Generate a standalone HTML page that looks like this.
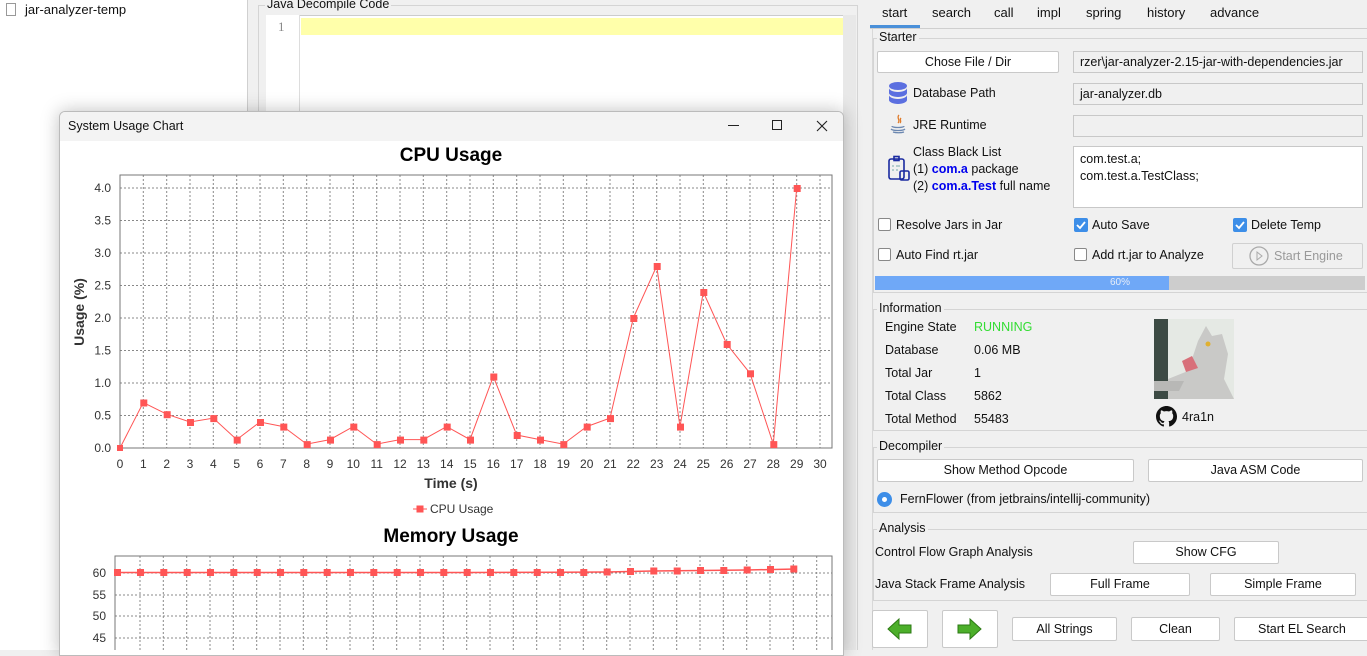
<!DOCTYPE html>
<html><head><meta charset="utf-8"><style>
*{margin:0;padding:0;box-sizing:border-box}
body{width:1367px;height:650px;overflow:hidden;background:#f0f0f0;font-family:"Liberation Sans",sans-serif;font-size:12.5px;color:#111;position:relative}
.a{position:absolute;white-space:nowrap}
.btn{position:absolute;background:#fff;border:1px solid #c9c9c9;border-radius:2px;text-align:center;font-size:12.5px}
.fld{position:absolute;background:#f0f0f0;border:1px solid #c8c8c8;padding-left:6px;font-size:12.5px}
.grp{position:absolute;border:1px solid #d4d4d4;border-right:none}
.gt{position:absolute;background:#f0f0f0;padding:0 2px;font-size:12.5px;top:-9px;left:3px}
.cb{position:absolute;width:13px;height:13px;border:1px solid #888;background:#fff;border-radius:2px}
.cbc{position:absolute;width:14px;height:14px;background:#3d8ee8;border-radius:2px}
</style></head><body>
<div class="a" style="left:0;top:0;width:248px;height:650px;background:#fff;border-right:1px solid #d0d0d0"></div>
<div class="a" style="left:6px;top:3px;width:10px;height:13px;border:1px solid #999;background:#fff"></div>
<div class="a" style="left:25px;top:2px;font-size:13px">jar-analyzer-temp</div>
<div class="a" style="left:258px;top:5px;width:600px;height:645px;border:1px solid #d4d4d4;border-bottom:none"></div>
<div class="a" style="left:265px;top:-3px;background:#f0f0f0;padding:0 2px;font-size:12.5px">Java Decompile Code</div>
<div class="a" style="left:266px;top:15px;width:578px;height:635px;background:#fff;border:1px solid #ccc"></div>
<div class="a" style="left:266px;top:15px;width:34px;height:635px;background:#fff;border-right:1px solid #ddd"></div>
<div class="a" style="left:278px;top:19px;color:#888;font-family:'Liberation Serif',serif;font-size:13px">1</div>
<div class="a" style="left:301px;top:18px;width:542px;height:17px;background:#ffffaa"></div>
<div class="a" style="left:843px;top:15px;width:13px;height:635px;background:#e8e8e8"></div>
<div class="a" style="left:59px;top:111px;width:785px;height:545px;background:#fff;border:1px solid #bbb;border-radius:6px 6px 0 0;box-shadow:0 0 18px rgba(0,0,0,.25);overflow:hidden">
<div style="height:29px;background:#f3f3f3;position:relative">
<div class="a" style="left:8px;top:7px;font-size:12.5px">System Usage Chart</div>
<div class="a" style="left:668px;top:13px;width:11px;height:1px;background:#222"></div>
<div class="a" style="left:712px;top:8px;width:10px;height:10px;border:1px solid #222"></div>
<svg class="a" style="left:756px;top:8px" width="12" height="12"><path d="M1 1L11 11M11 1L1 11" stroke="#222" stroke-width="1.1"/></svg>
</div></div>
<svg class="a" style="left:0;top:0" width="1367" height="650" viewBox="0 0 1367 650" font-family="Liberation Sans, sans-serif">
<text x="451" y="161" text-anchor="middle" font-size="19" font-weight="bold">CPU Usage</text>
<g stroke="#888" stroke-dasharray="2,2" stroke-width="1">
<path d="M120 188H832M120 220.5H832M120 253H832M120 285.5H832M120 318H832M120 350.5H832M120 383H832M120 415.5H832"/>
<path d="M143.3 175V448M166.7 175V448M190 175V448M213.3 175V448M236.7 175V448M260 175V448M283.3 175V448M306.7 175V448M330 175V448M353.3 175V448M376.7 175V448M400 175V448M423.3 175V448M446.7 175V448M470 175V448M493.3 175V448M516.7 175V448M540 175V448M563.3 175V448M586.7 175V448M610 175V448M633.3 175V448M656.7 175V448M680 175V448M703.3 175V448M726.7 175V448M750 175V448M773.3 175V448M796.7 175V448M820 175V448"/>
</g>
<rect x="120" y="175" width="712" height="273" fill="none" stroke="#777"/>
<g font-size="12" fill="#333" text-anchor="end">
<text x="111" y="452">0.0</text><text x="111" y="419.5">0.5</text><text x="111" y="387">1.0</text><text x="111" y="354.5">1.5</text><text x="111" y="322">2.0</text><text x="111" y="289.5">2.5</text><text x="111" y="257">3.0</text><text x="111" y="224.5">3.5</text><text x="111" y="192">4.0</text>
</g>
<g font-size="12" fill="#333" text-anchor="middle">
<text x="120" y="468">0</text><text x="143.3" y="468">1</text><text x="166.7" y="468">2</text><text x="190" y="468">3</text><text x="213.3" y="468">4</text><text x="236.7" y="468">5</text><text x="260" y="468">6</text><text x="283.3" y="468">7</text><text x="306.7" y="468">8</text><text x="330" y="468">9</text><text x="353.3" y="468">10</text><text x="376.7" y="468">11</text><text x="400" y="468">12</text><text x="423.3" y="468">13</text><text x="446.7" y="468">14</text><text x="470" y="468">15</text><text x="493.3" y="468">16</text><text x="516.7" y="468">17</text><text x="540" y="468">18</text><text x="563.3" y="468">19</text><text x="586.7" y="468">20</text><text x="610" y="468">21</text><text x="633.3" y="468">22</text><text x="656.7" y="468">23</text><text x="680" y="468">24</text><text x="703.3" y="468">25</text><text x="726.7" y="468">26</text><text x="750" y="468">27</text><text x="773.3" y="468">28</text><text x="796.7" y="468">29</text><text x="820" y="468">30</text>
</g>
<text x="451" y="488" text-anchor="middle" font-size="14" font-weight="bold" fill="#333">Time (s)</text>
<text transform="translate(84 312) rotate(-90)" text-anchor="middle" font-size="14" font-weight="bold" fill="#333">Usage (%)</text>
<polyline fill="none" stroke="#ff5555" stroke-width="1" points="120,448 143.3,402.5 166.7,414.2 190,422 213.3,418.1 236.7,439.6 260,422 283.3,426.6 306.7,444.1 330,439.6 353.3,426.6 376.7,444.1 400,439.6 423.3,439.6 446.7,426.6 470,439.6 493.3,376.5 516.7,435 540,439.6 563.3,444.1 586.7,426.6 610,418.1 633.3,318 656.7,266 680,426.6 703.3,292 726.7,344 750,373.3 773.3,444.1 796.7,188"/>
<g fill="#ff5555">
<rect x="117" y="445" width="6" height="6"/><rect x="140.3" y="399.5" width="7" height="7"/><rect x="163.7" y="411.2" width="7" height="7"/><rect x="187" y="419" width="7" height="7"/><rect x="210.3" y="415.1" width="7" height="7"/><rect x="233.7" y="436.6" width="7" height="7"/><rect x="257" y="419" width="7" height="7"/><rect x="280.3" y="423.6" width="7" height="7"/><rect x="303.7" y="441.1" width="7" height="7"/><rect x="327" y="436.6" width="7" height="7"/><rect x="350.3" y="423.6" width="7" height="7"/><rect x="373.7" y="441.1" width="7" height="7"/><rect x="397" y="436.6" width="7" height="7"/><rect x="420.3" y="436.6" width="7" height="7"/><rect x="443.7" y="423.6" width="7" height="7"/><rect x="467" y="436.6" width="7" height="7"/><rect x="490.3" y="373.5" width="7" height="7"/><rect x="513.7" y="432" width="7" height="7"/><rect x="537" y="436.6" width="7" height="7"/><rect x="560.3" y="441.1" width="7" height="7"/><rect x="583.7" y="423.6" width="7" height="7"/><rect x="607" y="415.1" width="7" height="7"/><rect x="630.3" y="315" width="7" height="7"/><rect x="653.7" y="263" width="7" height="7"/><rect x="677" y="423.6" width="7" height="7"/><rect x="700.3" y="289" width="7" height="7"/><rect x="723.7" y="341" width="7" height="7"/><rect x="747" y="370.3" width="7" height="7"/><rect x="770.3" y="441.1" width="7" height="7"/><rect x="793.7" y="185" width="7" height="7"/>
</g>
<line x1="413" y1="509" x2="427" y2="509" stroke="#ff5555"/><rect x="416.5" y="505.5" width="7" height="7" fill="#ff5555"/>
<text x="430" y="513" font-size="12" fill="#333">CPU Usage</text>
<text x="451" y="542" text-anchor="middle" font-size="19" font-weight="bold">Memory Usage</text>
<g stroke="#888" stroke-dasharray="2,2">
<path d="M115 573H832M115 595H832M115 616H832M115 638H832"/>
<path d="M140 556V650M163.3 556V650M186.7 556V650M210 556V650M233.3 556V650M256.7 556V650M280 556V650M303.3 556V650M326.7 556V650M350 556V650M373.3 556V650M396.7 556V650M420 556V650M443.3 556V650M466.7 556V650M490 556V650M513.3 556V650M536.7 556V650M560 556V650M583.3 556V650M606.7 556V650M630 556V650M653.3 556V650M676.7 556V650M700 556V650M723.3 556V650M746.7 556V650M770 556V650M793.3 556V650M816.7 556V650"/>
</g>
<rect x="115" y="556" width="717" height="100" fill="none" stroke="#777"/>
<g font-size="12" fill="#333" text-anchor="end"><text x="106" y="577">60</text><text x="106" y="599">55</text><text x="106" y="620">50</text><text x="106" y="642">45</text></g>
<polyline fill="none" stroke="#ff5555" stroke-width="1.5" points="117,572.5 466.7,572.5 560,572.3 606.7,572 653.3,571 700,570.5 746.7,570 796.7,569"/>
<g fill="#ff5555">
<rect x="114" y="569" width="7" height="7"/><rect x="137" y="569" width="7" height="7"/><rect x="160.3" y="569" width="7" height="7"/><rect x="183.7" y="569" width="7" height="7"/><rect x="207" y="569" width="7" height="7"/><rect x="230.3" y="569" width="7" height="7"/><rect x="253.7" y="569" width="7" height="7"/><rect x="277" y="569" width="7" height="7"/><rect x="300.3" y="569" width="7" height="7"/><rect x="323.7" y="569" width="7" height="7"/><rect x="347" y="569" width="7" height="7"/><rect x="370.3" y="569" width="7" height="7"/><rect x="393.7" y="569" width="7" height="7"/><rect x="417" y="569" width="7" height="7"/><rect x="440.3" y="569" width="7" height="7"/><rect x="463.7" y="569" width="7" height="7"/><rect x="487" y="569" width="7" height="7"/><rect x="510.3" y="569" width="7" height="7"/><rect x="533.7" y="569" width="7" height="7"/><rect x="557" y="569" width="7" height="7"/><rect x="580.3" y="569" width="7" height="7"/><rect x="603.7" y="568.5" width="7" height="7"/><rect x="627" y="568" width="7" height="7"/><rect x="650.3" y="567.5" width="7" height="7"/><rect x="673.7" y="567.5" width="7" height="7"/><rect x="697" y="567" width="7" height="7"/><rect x="720.3" y="567" width="7" height="7"/><rect x="743.7" y="566.5" width="7" height="7"/><rect x="767" y="566" width="7" height="7"/><rect x="790.3" y="565.5" width="7" height="7"/>
</g>
</svg>
<div class="a" style="left:872px;top:28px;width:1px;height:622px;background:#d8d8d8"></div>
<div class="a" style="left:870px;top:28px;width:497px;height:1px;background:#cfcfcf"></div>
<div class="a" style="left:870px;top:25px;width:50px;height:3px;background:#4a90d9"></div>
<div class="a" style="left:882px;top:5px;font-size:13px">start</div>
<div class="a" style="left:932px;top:5px;font-size:13px">search</div>
<div class="a" style="left:994px;top:5px;font-size:13px">call</div>
<div class="a" style="left:1037px;top:5px;font-size:13px">impl</div>
<div class="a" style="left:1086px;top:5px;font-size:13px">spring</div>
<div class="a" style="left:1147px;top:5px;font-size:13px">history</div>
<div class="a" style="left:1210px;top:5px;font-size:13px">advance</div>

<div class="grp" style="left:873px;top:38px;width:494px;height:255px"><div class="gt">Starter</div></div>
<div class="btn" style="left:877px;top:51px;width:182px;height:22px;line-height:20px">Chose File / Dir</div>
<div class="fld" style="left:1073px;top:51px;width:290px;height:22px;line-height:20px;font-size:12.5px">rzer\jar-analyzer-2.15-jar-with-dependencies.jar</div>
<svg class="a" style="left:887px;top:81px" width="22" height="24"><g fill="#5b6fe0"><ellipse cx="11" cy="5" rx="9" ry="4"/><path d="M2 7c0 2 4 4 9 4s9-2 9-4v5c0 2-4 4-9 4s-9-2-9-4z"/><path d="M2 14c0 2 4 4 9 4s9-2 9-4v5c0 2-4 4-9 4s-9-2-9-4z"/></g></svg>
<div class="a" style="left:913px;top:86px">Database Path</div>
<div class="fld" style="left:1073px;top:83px;width:290px;height:22px;line-height:20px">jar-analyzer.db</div>
<svg class="a" style="left:888px;top:114px" width="20" height="22"><path d="M11 1c-3 3 2 5-1 8M13 4c-2 2 1 3-1 5" stroke="#e07b2a" fill="none" stroke-width="1.3"/><path d="M4 12c0 2 12 2 12 0M3 15c2 2 12 2 14 0M5 18c3 1 8 1 11 0" stroke="#6b87b0" fill="none" stroke-width="1.3"/></svg>
<div class="a" style="left:913px;top:118px">JRE Runtime</div>
<div class="fld" style="left:1073px;top:115px;width:290px;height:22px"></div>
<svg class="a" style="left:887px;top:155px" width="24" height="28"><g fill="none" stroke="#1a2aa0" stroke-width="1.6"><rect x="2" y="4" width="15" height="20" rx="2"/><rect x="7" y="1.5" width="5" height="4"/><rect x="13" y="16" width="9" height="9" rx="1.5"/></g><path d="M5 11h2M5 15h2M9 11h4M9 15h2" stroke="#7aa" stroke-width="1"/></svg>
<div class="a" style="left:913px;top:145px">Class Black List</div>
<div class="a" style="left:913px;top:162px">(1) <b style="color:#0000ee">com.a</b> package</div>
<div class="a" style="left:913px;top:179px">(2) <b style="color:#0000ee">com.a.Test</b> full name</div>
<div class="a" style="left:1073px;top:146px;width:290px;height:62px;background:#fff;border:1px solid #c8c8c8;padding:4px 6px;line-height:17px;white-space:normal">com.test.a;<br>com.test.a.TestClass;</div>
<div class="cb" style="left:878px;top:218px"></div><div class="a" style="left:896px;top:218px">Resolve Jars in Jar</div>
<div class="cbc" style="left:1074px;top:218px"></div><svg class="a" style="left:1074px;top:218px" width="14" height="14"><path d="M3 7l3 3 5-6" stroke="#fff" stroke-width="1.8" fill="none"/></svg><div class="a" style="left:1092px;top:218px">Auto Save</div>
<div class="cbc" style="left:1233px;top:218px"></div><svg class="a" style="left:1233px;top:218px" width="14" height="14"><path d="M3 7l3 3 5-6" stroke="#fff" stroke-width="1.8" fill="none"/></svg><div class="a" style="left:1251px;top:218px">Delete Temp</div>
<div class="cb" style="left:878px;top:248px"></div><div class="a" style="left:896px;top:248px">Auto Find rt.jar</div>
<div class="cb" style="left:1074px;top:248px"></div><div class="a" style="left:1092px;top:248px">Add rt.jar to Analyze</div>
<div class="a" style="left:1232px;top:243px;width:131px;height:26px;border:1px solid #d0d0d0;border-radius:2px"></div>
<svg class="a" style="left:1249px;top:246px" width="20" height="20"><circle cx="10" cy="10" r="9" fill="none" stroke="#aaa" stroke-width="1.3"/><path d="M8 6v8l5-4z" fill="none" stroke="#aaa"/></svg>
<div class="a" style="left:1274px;top:249px;color:#999">Start Engine</div>
<div class="a" style="left:875px;top:276px;width:490px;height:14px;background:#cdcdcd"></div>
<div class="a" style="left:875px;top:276px;width:294px;height:14px;background:#6fa8f7"></div>
<div class="a" style="left:1110px;top:277px;font-size:10px;color:#e8eef8">60%</div>

<div class="grp" style="left:873px;top:309px;width:494px;height:122px"><div class="gt">Information</div></div>
<div class="a" style="left:885px;top:320px">Engine State</div><div class="a" style="left:974px;top:320px;color:#33dd33">RUNNING</div>
<div class="a" style="left:885px;top:343px">Database</div><div class="a" style="left:974px;top:343px">0.06 MB</div>
<div class="a" style="left:885px;top:366px">Total Jar</div><div class="a" style="left:974px;top:366px">1</div>
<div class="a" style="left:885px;top:389px">Total Class</div><div class="a" style="left:974px;top:389px">5862</div>
<div class="a" style="left:885px;top:412px">Total Method</div><div class="a" style="left:974px;top:412px">55483</div>
<svg class="a" style="left:1154px;top:319px" width="80" height="80"><rect width="80" height="80" fill="#e5e9e4"/><rect width="14" height="80" fill="#3c4a44"/><path d="M14 80V60l20-8 10-30 8-15 6 10 10-2 6 20-4 25 10 20z" fill="#c9c9c7"/><path d="M28 42l10-5 6 12-12 4z" fill="#d8707a"/><circle cx="54" cy="25" r="2.5" fill="#e0b030"/><path d="M0 62h30l-5 10H0z" fill="#b8b8b6"/></svg>
<svg class="a" style="left:1156px;top:406px" width="21" height="21" viewBox="0 0 16 16"><path d="M8 0C3.58 0 0 3.580 0 8c0 3.54 2.29 6.530 5.47 7.59.4.07.55-.17.55-.38v-1.34c-2.23.48-2.69-1.07-2.69-1.07-.36-.92-.89-1.170-.89-1.17-.73-.5.05-.49.05-.49.8.06 1.23.83 1.23.83.71 1.22 1.87.87 2.33.66.07-.52.28-.87.5-1.07-1.78-.2-3.64-.89-3.64-3.95 0-.87.31-1.59.82-2.15-.08-.2-.36-1.02.08-2.12 0 0 .67-.21 2.2.82a7.6 7.6 0 014 0c1.53-1.04 2.2-.82 2.2-.82.44 1.1.16 1.92.08 2.12.51.56.82 1.27.82 2.15 0 3.07-1.87 3.75-3.65 3.95.29.25.54.73.54 1.48v2.2c0 .21.15.46.55.38A8.01 8.01 0 0016 8c0-4.42-3.58-8-8-8z" fill="#111"/></svg>
<div class="a" style="left:1182px;top:410px">4ra1n</div>

<div class="grp" style="left:873px;top:447px;width:494px;height:66px"><div class="gt">Decompiler</div></div>
<div class="btn" style="left:877px;top:459px;width:257px;height:23px;line-height:21px">Show Method Opcode</div>
<div class="btn" style="left:1148px;top:459px;width:215px;height:23px;line-height:21px">Java ASM Code</div>
<div class="a" style="left:877px;top:492px;width:15px;height:15px;border-radius:50%;background:#3d8ee8"></div>
<div class="a" style="left:882px;top:497px;width:5px;height:5px;border-radius:50%;background:#fff"></div>
<div class="a" style="left:900px;top:492px">FernFlower (from jetbrains/intellij-community)</div>

<div class="grp" style="left:873px;top:529px;width:494px;height:72px"><div class="gt">Analysis</div></div>
<div class="a" style="left:875px;top:545px">Control Flow Graph Analysis</div>
<div class="btn" style="left:1133px;top:541px;width:146px;height:23px;line-height:21px">Show CFG</div>
<div class="a" style="left:875px;top:577px">Java Stack Frame Analysis</div>
<div class="btn" style="left:1050px;top:573px;width:140px;height:23px;line-height:21px">Full Frame</div>
<div class="btn" style="left:1210px;top:573px;width:146px;height:23px;line-height:21px">Simple Frame</div>

<div class="btn" style="left:872px;top:610px;width:56px;height:38px"></div>
<svg class="a" style="left:887px;top:616px" width="26" height="26"><path d="M1 13L12 3v6h12v8H12v6z" fill="#4caf2a" stroke="#2d7a14"/></svg>
<div class="btn" style="left:942px;top:610px;width:56px;height:38px"></div>
<svg class="a" style="left:956px;top:616px" width="26" height="26"><path d="M25 13L14 3v6H2v8h12v6z" fill="#4caf2a" stroke="#2d7a14"/></svg>
<div class="btn" style="left:1012px;top:617px;width:105px;height:24px;line-height:22px">All Strings</div>
<div class="btn" style="left:1131px;top:617px;width:89px;height:24px;line-height:22px">Clean</div>
<div class="btn" style="left:1234px;top:617px;width:140px;height:24px;line-height:22px;text-align:left;padding-left:23px">Start EL Search</div>
</body></html>
